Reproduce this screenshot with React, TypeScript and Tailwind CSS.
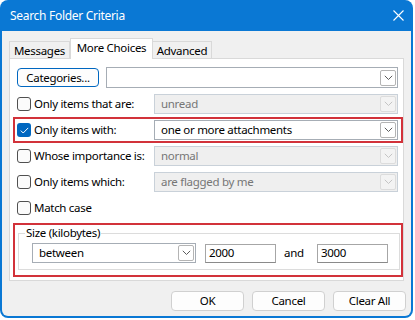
import React from "react";

const font = { fontFamily: '"Noto Sans", "Open Sans", sans-serif' };

function Chevron({ disabled }: { disabled?: boolean }) {
  return (
    <div
      className={`w-[16px] h-[16px] flex items-center justify-center rounded-[2px] border ${
        disabled ? "border-[#dcdcdc] bg-[#f3f3f3]" : "border-[#b4b4b4] bg-white"
      }`}
    >
      <svg width="9" height="6" viewBox="0 0 9 6">
        <path
          d="M0.8 0.8 L4.5 4.5 L8.2 0.8"
          fill="none"
          stroke={disabled ? "#c4c4c4" : "#5c5c5c"}
          strokeWidth="1"
        />
      </svg>
    </div>
  );
}

function Select({
  text,
  disabled,
  className = "",
}: {
  text: string;
  disabled?: boolean;
  className?: string;
}) {
  return (
    <div
      className={`h-[20px] flex items-center justify-between pl-[6px] pr-[1px] border ${
        disabled
          ? "bg-[#efefef] border-[#c9d1d9] text-[#767676]"
          : "bg-white border-[#a6adb5] text-black"
      } ${className}`}
    >
      <span className="leading-none">{text}</span>
      <Chevron disabled={disabled} />
    </div>
  );
}

function Checkbox({ checked }: { checked?: boolean }) {
  if (checked) {
    return (
      <div className="w-[14px] h-[14px] rounded-[3px] bg-[#0067c0] flex items-center justify-center shrink-0">
        <svg width="9" height="7" viewBox="0 0 9 7">
          <path d="M0.8 3.6 L3.2 6 L8.2 0.9" fill="none" stroke="white" strokeWidth="1" />
        </svg>
      </div>
    );
  }
  return (
    <div className="w-[14px] h-[14px] rounded-[3px] border border-[#505050] bg-[#fbfbfb] shrink-0" />
  );
}

function CheckRow({
  label,
  checked,
  value,
  disabled,
}: {
  label: string;
  checked?: boolean;
  value: string;
  disabled?: boolean;
}) {
  return (
    <div className="h-[26px] flex items-center">
      <Checkbox checked={checked} />
      <span className="ml-[3px] leading-none whitespace-nowrap">{label}</span>
      <Select text={value} disabled={disabled} className="w-[244px] ml-auto" />
    </div>
  );
}

function Button({ label }: { label: string }) {
  return (
    <div className="w-[73px] h-[20px] bg-[#fdfdfd] border border-[#d0d0d0] rounded-[4px] flex items-center justify-center leading-none">
      {label}
    </div>
  );
}

export default function App() {
  return (
    <div className="w-[415px] h-[320px] bg-white text-[11.5px] tracking-[-0.3px] text-black" style={font}>
      <div className="w-[413px] h-[318px] bg-[#0a78d4] rounded-[8px] flex flex-col px-[2px] pb-[2px]">
        {/* title bar */}
        <div className="h-[31px] flex items-center justify-between pl-[8px] pr-[6px] text-white shrink-0">
          <span className="text-[12px] leading-none">Search Folder Criteria</span>
          <svg width="11" height="11" viewBox="0 0 11 11" className="mr-[1px]">
            <path d="M0.5 0.5 L10.5 10.5 M10.5 0.5 L0.5 10.5" stroke="white" strokeWidth="1.1" />
          </svg>
        </div>
        {/* body */}
        <div className="flex-1 bg-[#f0f0f0] rounded-b-[6px] flex flex-col pl-[7px] pr-[5px] pt-[7px]">
          {/* tabs */}
          <div className="flex items-end h-[20px] relative z-10">
            <div className="h-[17px] w-[61px] border border-b-0 border-[#d9d9d9] bg-[#f0f0f0] flex items-center justify-center leading-none pt-[1px]">
              Messages
            </div>
            <div className="h-[21px] w-[83px] -mb-px border border-b-0 border-[#d9d9d9] bg-white flex items-center justify-center leading-none pb-[3px]">
              More Choices
            </div>
            <div className="h-[17px] w-[59px] border border-b-0 border-l-0 border-[#d9d9d9] bg-[#f0f0f0] flex items-center justify-center leading-none pt-[1px]">
              Advanced
            </div>
          </div>
          {/* panel */}
          <div className="w-[395px] h-[223px] bg-white border border-[#d9d9d9] pl-[7px] pr-[5px] pt-[8px] flex flex-col">
            <div className="h-[21px] flex items-center">
              <div className="w-[82px] h-[19px] border border-[#0067c0] rounded-[4px] bg-[#fdfdfd] flex items-center justify-center leading-none">
                Categories...
              </div>
              <div className="ml-auto w-[292px] h-[21px] border border-[#a6adb5] bg-white flex items-center justify-end pr-[1px]">
                <Chevron />
              </div>
            </div>
            <div className="h-[3px]" />
            <CheckRow label="Only items that are:" value="unread" disabled />
            <div className="h-[26px] -ml-[4px] -mr-[5px] border-2 border-[#d2323a] pl-[2px] pr-[3px] flex items-center">
              <Checkbox checked />
              <span className="ml-[3px] leading-none">Only items with:</span>
              <Select text="one or more attachments" className="w-[244px] ml-auto" />
            </div>
            <CheckRow label="Whose importance is:" value="normal" disabled />
            <CheckRow label="Only items which:" value="are flagged by me" disabled />
            <div className="h-[26px] flex items-center">
              <Checkbox />
              <span className="ml-[3px] leading-none">Match case</span>
            </div>
            <div className="mt-[2px] -ml-[4px] -mr-[5px] h-[54px] border-2 border-[#d2323a] px-[3px] pt-[1px]">
              <fieldset className="border border-[#dcdcdc] pl-[13px] pr-[11px] pt-[3px] pb-[6px]">
                <legend className="px-[1px] -ml-[7px] leading-[14px]">Size (kilobytes)</legend>
                <div className="flex items-center">
                  <Select text="between" className="w-[164px]" />
                  <div className="ml-[9px] w-[71px] h-[19px] border border-[#a6a6a6] border-b-[#8a8a8a] bg-white flex items-center pl-[3px] leading-none">
                    2000
                  </div>
                  <span className="ml-[8px] w-[33px] leading-none">and</span>
                  <div className="w-[71px] h-[19px] border border-[#a6a6a6] border-b-[#8a8a8a] bg-white flex items-center pl-[3px] leading-none">
                    3000
                  </div>
                </div>
              </fieldset>
            </div>
          </div>
          {/* buttons */}
          <div className="flex justify-end gap-[8px] mt-[10px] pr-[0px]">
            <Button label="OK" />
            <Button label="Cancel" />
            <Button label="Clear All" />
          </div>
        </div>
      </div>
    </div>
  );
}
